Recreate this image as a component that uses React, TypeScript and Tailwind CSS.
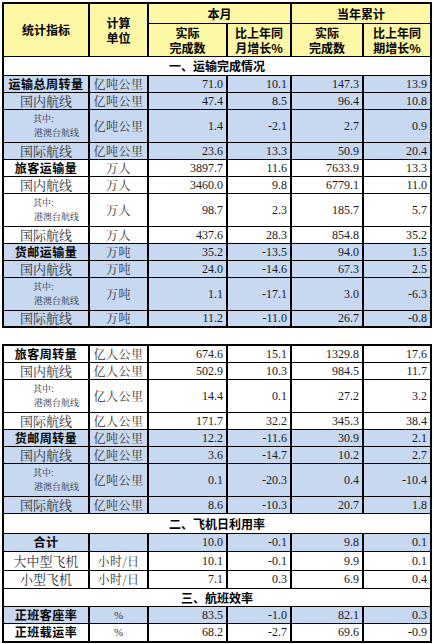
import React from 'react';

type Kind = 'main' | 'sub' | 'hk';

interface RowType {
  label: string;
  kind: Kind;
  unit: string;
  v: string[];
  blue: boolean;
  h: string; // row height class
}

const cjk = "font-['Noto_Sans_CJK_SC','Noto_Sans',sans-serif]";
const song = "font-['Noto_Serif_CJK_SC','Noto_Sans_CJK_SC',serif]";
const num = "font-['Liberation_Serif','Times_New_Roman',serif]";
const cell = 'border-x-2 border-y border-black p-0 leading-[13px] text-[12px]';

const group = (
  label: string,
  unit: string,
  vals: string[][],
  blue: boolean
): RowType[] => [
  { label, kind: 'main', unit, v: vals[0], blue, h: 'h-[17px]' },
  { label: '国内航线', kind: 'sub', unit, v: vals[1], blue, h: 'h-[17px]' },
  { label: '', kind: 'hk', unit, v: vals[2], blue, h: 'h-[33px]' },
  { label: '国际航线', kind: 'sub', unit, v: vals[3], blue, h: 'h-[17px]' },
];

const table1: RowType[] = [
  ...group('运输总周转量', '亿吨公里', [
    ['71.0', '10.1', '147.3', '13.9'],
    ['47.4', '8.5', '96.4', '10.8'],
    ['1.4', '-2.1', '2.7', '0.9'],
    ['23.6', '13.3', '50.9', '20.4'],
  ], true),
  ...group('旅客运输量', '万人', [
    ['3897.7', '11.6', '7633.9', '13.3'],
    ['3460.0', '9.8', '6779.1', '11.0'],
    ['98.7', '2.3', '185.7', '5.7'],
    ['437.6', '28.3', '854.8', '35.2'],
  ], false),
  ...group('货邮运输量', '万吨', [
    ['35.2', '-13.5', '94.0', '1.5'],
    ['24.0', '-14.6', '67.3', '2.5'],
    ['1.1', '-17.1', '3.0', '-6.3'],
    ['11.2', '-11.0', '26.7', '-0.8'],
  ], true),
];

const table2a: RowType[] = [
  ...group('旅客周转量', '亿人公里', [
    ['674.6', '15.1', '1329.8', '17.6'],
    ['502.9', '10.3', '984.5', '11.7'],
    ['14.4', '0.1', '27.2', '3.2'],
    ['171.7', '32.2', '345.3', '38.4'],
  ], false),
  ...group('货邮周转量', '亿吨公里', [
    ['12.2', '-11.6', '30.9', '2.1'],
    ['3.6', '-14.7', '10.2', '2.7'],
    ['0.1', '-20.3', '0.4', '-10.4'],
    ['8.6', '-10.3', '20.7', '1.8'],
  ], true),
];

const table2b: RowType[] = [
  { label: '合计', kind: 'main', unit: '', v: ['10.0', '-0.1', '9.8', '0.1'], blue: true, h: 'h-[18px]' },
  { label: '大中型飞机', kind: 'sub', unit: '小时/日', v: ['10.1', '-0.1', '9.9', '0.1'], blue: false, h: 'h-[19px]' },
  { label: '小型飞机', kind: 'sub', unit: '小时/日', v: ['7.1', '0.3', '6.9', '0.4'], blue: false, h: 'h-[18px]' },
];

const table2c: RowType[] = [
  { label: '正班客座率', kind: 'main', unit: '%', v: ['83.5', '-1.0', '82.1', '0.3'], blue: true, h: 'h-[17px]' },
  { label: '正班载运率', kind: 'main', unit: '%', v: ['68.2', '-2.7', '69.6', '-0.9'], blue: false, h: 'h-[19px]' },
];

const Cols = () => (
  <colgroup>
    <col className="w-[86px]" />
    <col className="w-[59px]" />
    <col className="w-[79px]" />
    <col className="w-[64px]" />
    <col className="w-[72px]" />
    <col className="w-[68px]" />
  </colgroup>
);

const DataRow: React.FC<{ r: RowType }> = ({ r }) => {
  const bg = r.blue ? 'bg-[#c6d9f1]' : 'bg-white';
  return (
    <tr className={`${r.h} ${bg}`}>
      <td className={`${cell} text-center`}>
        {r.kind === 'main' && (
          <span className={`${cjk} text-[12px] font-bold text-black tracking-[0.5px]`}>
            {r.label}
          </span>
        )}
        {r.kind === 'sub' && (
          <span className={`${song} text-[13px] text-[#333]`}>{r.label}</span>
        )}
        {r.kind === 'hk' && (
          <div className={`${song} pl-[30px] text-left text-[9px] leading-[14px] text-[#333]`}>
            <div className="-ml-[1px]">其中:</div>
            <div>港澳台航线</div>
          </div>
        )}
      </td>
      <td className={`${cell} text-center`}>
        <span
          className={`${r.unit === '%' ? num + ' text-[11px]' : song + ' text-[12px] tracking-[0.5px]'} text-[#333]`}
        >
          {r.unit}
        </span>
      </td>
      {r.v.map((x, i) => (
        <td key={i} className={`${cell} pr-[3px] text-right`}>
          <span className={`${num} text-[12px] text-[#1a1a1a]`}>{x}</span>
        </td>
      ))}
    </tr>
  );
};

const Section: React.FC<{ title: string; h: string }> = ({ title, h }) => (
  <tr className={`${h} bg-white`}>
    <td colSpan={6} className="border-y border-black p-0 text-center leading-[13px]">
      <span className={`${cjk} text-[12px] font-bold text-black`}>{title}</span>
    </td>
  </tr>
);

export default function App() {
  const th = `border-x-2 border-y border-black p-0 bg-[#fcf8a4] text-center ${cjk} text-[12px] font-bold text-black leading-[15px]`;
  return (
    <div className="w-[434px] h-[644px] bg-white pl-[2px] pt-[2px]">
      <table className="w-[429px] table-fixed border-collapse border-2 border-black">
        <Cols />
        <tbody>
          <tr className="h-[20px]">
            <td rowSpan={2} className={th}>统计指标</td>
            <td rowSpan={2} className={th}>
              计算
              <br />
              单位
            </td>
            <td colSpan={2} className={th}>本月</td>
            <td colSpan={2} className={th}>当年累计</td>
          </tr>
          <tr className="h-[33px]">
            <td className={th}>
              实际
              <br />
              完成数
            </td>
            <td className={th}>
              比上年同
              <br />
              月增长%
            </td>
            <td className={th}>
              实际
              <br />
              完成数
            </td>
            <td className={th}>
              比上年同
              <br />
              期增长%
            </td>
          </tr>
          <Section title="一、运输完成情况" h="h-[19px]" />
          {table1.map((r, i) => (
            <DataRow key={i} r={r} />
          ))}
        </tbody>
      </table>

      <table className="mt-[16px] w-[429px] table-fixed border-collapse border-2 border-black">
        <Cols />
        <tbody>
          {table2a.map((r, i) => (
            <DataRow key={i} r={r} />
          ))}
          <Section title="二、飞机日利用率" h="h-[20px]" />
          {table2b.map((r, i) => (
            <DataRow key={i} r={r} />
          ))}
          <Section title="三、航班效率" h="h-[18px]" />
          {table2c.map((r, i) => (
            <DataRow key={i} r={r} />
          ))}
        </tbody>
      </table>
    </div>
  );
}
